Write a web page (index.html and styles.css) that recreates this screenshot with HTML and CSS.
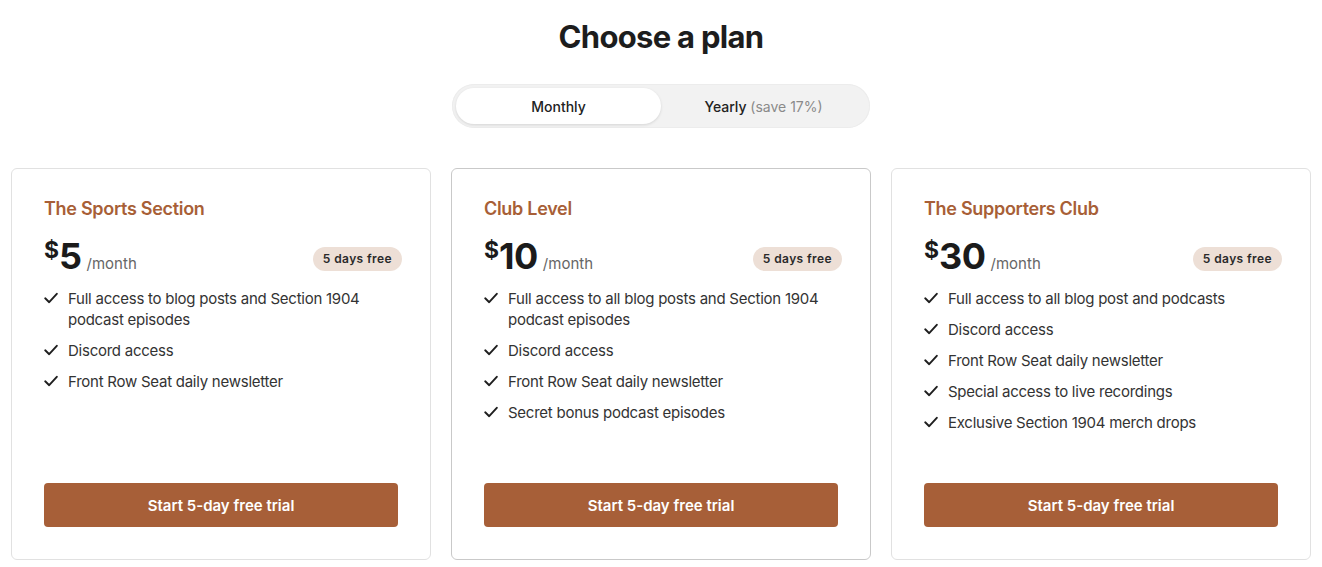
FILE: index.html
```html
<!DOCTYPE html>
<html lang="en">
<head>
<meta charset="utf-8">
<title>Choose a plan</title>
<link rel="stylesheet" href="styles.css">
</head>
<body>
<main class="page">
  <h1 class="title">Choose a plan</h1>
  <div class="toggle">
    <button class="toggle-opt active">Monthly</button>
    <button class="toggle-opt">Yearly <span class="save">(save 17%)</span></button>
  </div>
  <section class="cards">
    <article class="card">
      <h2 class="plan-name">The Sports Section</h2>
      <div class="price-row">
        <div class="price"><span class="cur">$</span><span class="amt">5</span><span class="per">/month</span></div>
        <span class="badge">5 days free</span>
      </div>
      <ul class="features">
        <li><svg class="chk" viewBox="0 0 14 12"><path d="M1.2 6.3 L5.2 10.2 L12.8 1.8"/></svg><span>Full access to blog posts and Section 1904 podcast episodes</span></li>
        <li><svg class="chk" viewBox="0 0 14 12"><path d="M1.2 6.3 L5.2 10.2 L12.8 1.8"/></svg><span>Discord access</span></li>
        <li><svg class="chk" viewBox="0 0 14 12"><path d="M1.2 6.3 L5.2 10.2 L12.8 1.8"/></svg><span>Front Row Seat daily newsletter</span></li>
      </ul>
      <button class="cta">Start 5-day free trial</button>
    </article>
    <article class="card selected">
      <h2 class="plan-name">Club Level</h2>
      <div class="price-row">
        <div class="price"><span class="cur">$</span><span class="amt">10</span><span class="per">/month</span></div>
        <span class="badge">5 days free</span>
      </div>
      <ul class="features">
        <li><svg class="chk" viewBox="0 0 14 12"><path d="M1.2 6.3 L5.2 10.2 L12.8 1.8"/></svg><span>Full access to all blog posts and Section 1904 podcast episodes</span></li>
        <li><svg class="chk" viewBox="0 0 14 12"><path d="M1.2 6.3 L5.2 10.2 L12.8 1.8"/></svg><span>Discord access</span></li>
        <li><svg class="chk" viewBox="0 0 14 12"><path d="M1.2 6.3 L5.2 10.2 L12.8 1.8"/></svg><span>Front Row Seat daily newsletter</span></li>
        <li><svg class="chk" viewBox="0 0 14 12"><path d="M1.2 6.3 L5.2 10.2 L12.8 1.8"/></svg><span>Secret bonus podcast episodes</span></li>
      </ul>
      <button class="cta">Start 5-day free trial</button>
    </article>
    <article class="card">
      <h2 class="plan-name">The Supporters Club</h2>
      <div class="price-row">
        <div class="price"><span class="cur">$</span><span class="amt">30</span><span class="per">/month</span></div>
        <span class="badge">5 days free</span>
      </div>
      <ul class="features">
        <li><svg class="chk" viewBox="0 0 14 12"><path d="M1.2 6.3 L5.2 10.2 L12.8 1.8"/></svg><span>Full access to all blog post and podcasts</span></li>
        <li><svg class="chk" viewBox="0 0 14 12"><path d="M1.2 6.3 L5.2 10.2 L12.8 1.8"/></svg><span>Discord access</span></li>
        <li><svg class="chk" viewBox="0 0 14 12"><path d="M1.2 6.3 L5.2 10.2 L12.8 1.8"/></svg><span>Front Row Seat daily newsletter</span></li>
        <li><svg class="chk" viewBox="0 0 14 12"><path d="M1.2 6.3 L5.2 10.2 L12.8 1.8"/></svg><span>Special access to live recordings</span></li>
        <li><svg class="chk" viewBox="0 0 14 12"><path d="M1.2 6.3 L5.2 10.2 L12.8 1.8"/></svg><span>Exclusive Section 1904 merch drops</span></li>
      </ul>
      <button class="cta">Start 5-day free trial</button>
    </article>
  </section>
</main>
</body>
</html>
```
FILE: styles.css
```css
* { box-sizing: border-box; }
html, body { margin: 0; padding: 0; background: #fff; }
body {
  font-family: Inter, "Noto Sans", "Liberation Sans", sans-serif;
  color: #222;
}
.page {
  width: 1300px;
  margin: 0 auto;
  padding-top: 17px;
  display: flex;
  flex-direction: column;
  align-items: center;
}
.title {
  margin: 0;
  font-size: 31px;
  line-height: 40px;
  font-weight: 700;
  letter-spacing: -0.7px;
  color: #1d1d1d;
}
.toggle {
  margin-top: 27px;
  width: 418px;
  height: 44px;
  padding: 4px;
  border-radius: 22px;
  background: #f2f2f2;
  display: flex;
  box-shadow: inset 0 0 0 1px #ececec;
}
.toggle-opt {
  flex: 1;
  border: none;
  background: transparent;
  border-radius: 18px;
  font-family: inherit;
  font-size: 14px;
  font-weight: 500;
  color: #222;
  padding: 0;
  cursor: pointer;
}
.toggle-opt.active {
  background: #fff;
  box-shadow: 0 1px 3px rgba(0,0,0,0.12);
}
.save { color: #8a8a8a; font-weight: 400; }
.cards {
  margin-top: 40px;
  width: 100%;
  display: flex;
  gap: 20px;
}
.card {
  flex: 1;
  min-height: 392px;
  border: 1px solid #e1e1e1;
  border-radius: 6px;
  padding: 27px 32px 32px 32px;
  display: flex;
  flex-direction: column;
  background: #fff;
}
.card.selected { border-color: #c9c9c9; }
.plan-name {
  margin: 0;
  font-size: 18px;
  line-height: 26px;
  font-weight: 600;
  color: #a85f37;
  letter-spacing: -0.3px;
}
.price-row {
  margin-top: 16px;
  display: flex;
  align-items: center;
  justify-content: space-between;
  margin-right: -4px;
}
.price {
  display: flex;
  align-items: baseline;
  color: #1b1b1b;
}
.cur {
  font-size: 23px;
  font-weight: 700;
  align-self: flex-start;
  line-height: 22px;
  margin-top: 1px;
}
.amt {
  font-size: 36px;
  line-height: 36px;
  font-weight: 700;
  letter-spacing: -0.5px;
}
.per {
  font-size: 15px;
  color: #666;
  margin-left: 5px;
}
.badge {
  background: #eddfd6;
  color: #2a2a2a;
  font-size: 12px;
  font-weight: 600;
  line-height: 24px;
  padding: 0 10px;
  letter-spacing: 0.4px;
  border-radius: 12px;
  margin-top: 5px;
}
.features {
  list-style: none;
  margin: 14px 0 40px 0;
  padding: 0;
  display: flex;
  flex-direction: column;
  gap: 10px;
}
.features li {
  display: flex;
  align-items: flex-start;
  font-size: 15px;
  line-height: 21px;
  letter-spacing: -0.25px;
  color: #333;
}
.chk {
  width: 14px;
  height: 12px;
  flex: none;
  margin: 4px 10px 0 0;
  fill: none;
  stroke: #1e1e1e;
  stroke-width: 1.9;
  stroke-linecap: round;
  stroke-linejoin: round;
}
.cta {
  margin-top: auto;
  height: 44px;
  width: 100%;
  border: none;
  border-radius: 4px;
  background: #a75f38;
  color: #fff;
  font-family: inherit;
  font-size: 15px;
  font-weight: 600;
  cursor: pointer;
}
```
